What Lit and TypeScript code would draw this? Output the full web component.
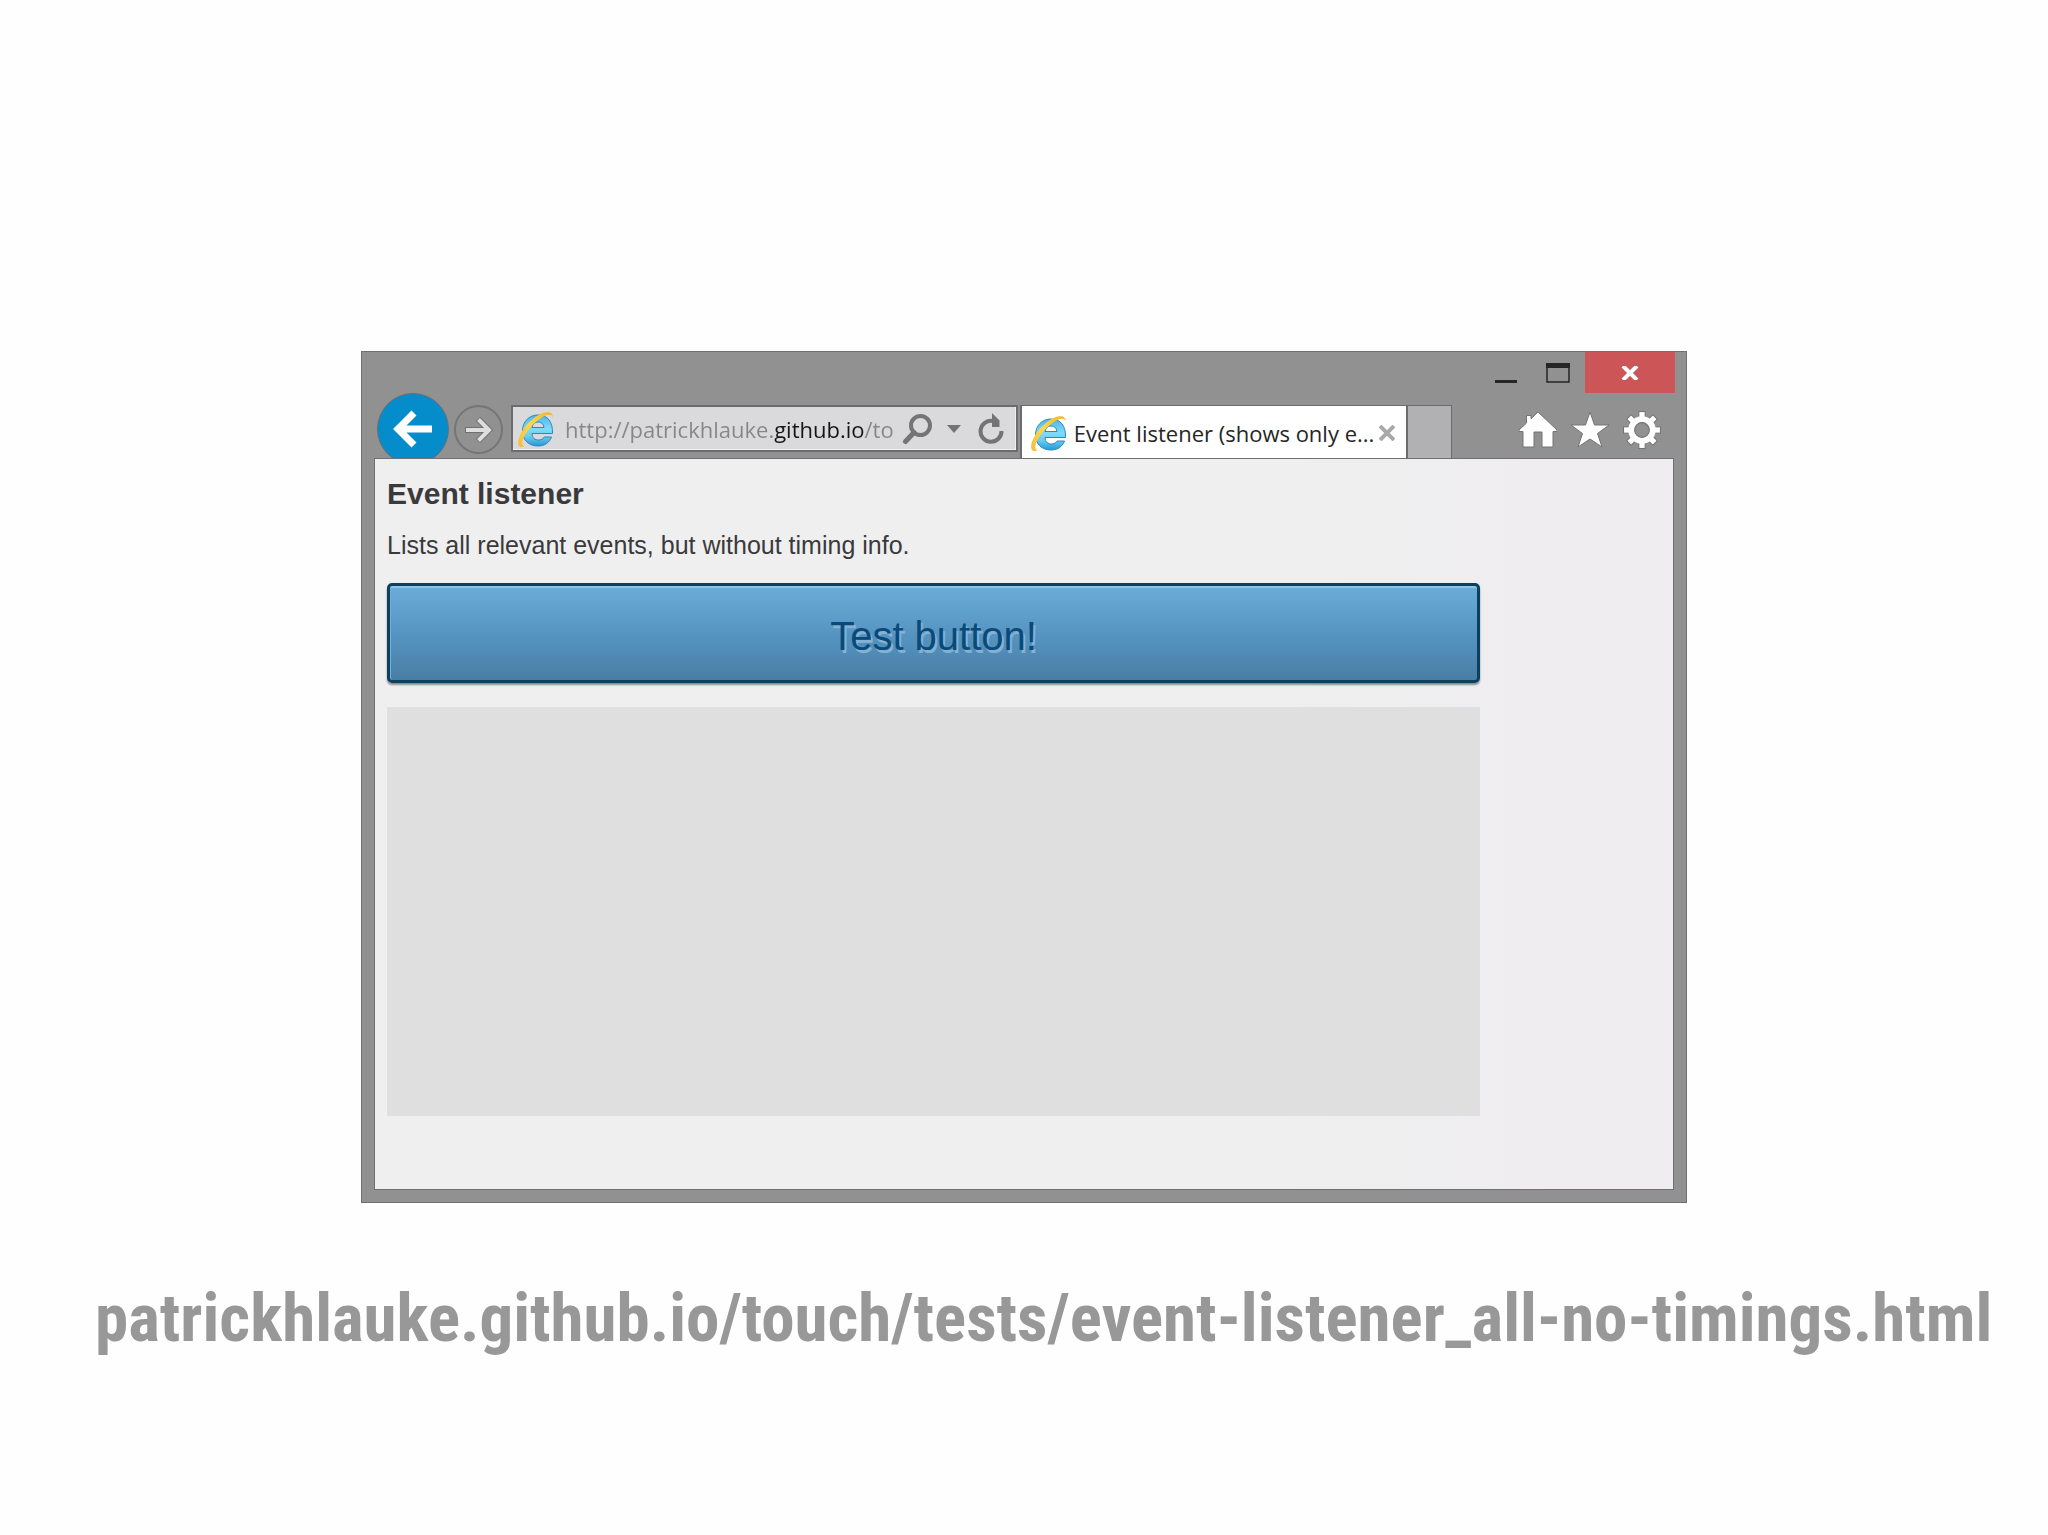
import { LitElement, html, css, svg } from "lit";
import { customElement } from "lit/decorators.js";

const browserLogo = html`<svg class="logo" viewBox="0 0 36 38" aria-hidden="true">
  <defs>
    <linearGradient id="e" x1="0" y1="0" x2="0" y2="1">
      <stop offset="0" stop-color="#4fb4e6" />
      <stop offset="0.45" stop-color="#7fdcf8" />
      <stop offset="0.7" stop-color="#66cdf2" />
      <stop offset="1" stop-color="#2a96d2" />
    </linearGradient>
    <linearGradient id="s" x1="1" y1="0" x2="0" y2="1">
      <stop offset="0" stop-color="#f0b323" />
      <stop offset="0.5" stop-color="#ffd84a" />
      <stop offset="1" stop-color="#f2bd3a" />
    </linearGradient>
  </defs>
  <path fill="url(#e)" stroke="#2b88c0" stroke-width="1" fill-rule="evenodd"
    d="M34.5 23.5H14c.3 4.600 3 6.500 6.500 6.500 2.800 0 4.600-1 5.700-3h7.300C31.300 32.800 26.500 36 20 36 10.500 36 4.500 29.800 4.500 20.800S11 5 20 5c9.500 0 15 6.800 14.500 18.500ZM14 17.500h12c-.4-3.600-2.500-5.500-6-5.500s-5.500 2-6 5.500Z" />
  <path fill="url(#s)"
    d="M35 8.500C35.500 1 27.500 0 18 6.500 7 14-2.500 29 .8 35.500c1.200 2 3.800 1.800 6.200.5-4.200.2-3.600-6.500 2.500-15C16.500 11.500 27 3.800 32 4.800c2 .4 2.800 1.700 3 3.700Z" />
</svg>`;

const gearTeeth = [0, 45, 90, 135, 180, 225, 270, 315].map(
  (a) => svg`<rect x="15" y="0.500" width="6" height="8" transform="rotate(${a} 18 18)" />`
);

@customElement("browser-toolbar")
export class BrowserToolbar extends LitElement {
  static styles = css`
    :host {
      display: block;
      font-family: "Open Sans", "Noto Sans", sans-serif;
    }
    button {
      appearance: none;
      border: 0;
      margin: 0;
      padding: 0;
      background: none;
      font: inherit;
      color: inherit;
      display: flex;
      align-items: center;
      justify-content: center;
    }
    svg {
      display: block;
      flex: none;
    }
    .controls {
      display: flex;
      justify-content: flex-end;
      height: 41px;
      padding-right: 11px;
    }
    .control {
      width: 52px;
      height: 41px;
    }
    .control.close {
      width: 90px;
      background: #cc5558;
      margin-left: 1px;
    }
    .bar {
      display: flex;
      align-items: flex-end;
      height: 65px;
      padding: 0 25px 0 15px;
      overflow: hidden;
    }
    .back {
      align-self: flex-start;
      flex: none;
      width: 72px;
      height: 72px;
      border: 1px solid #6a6d70;
      border-radius: 50%;
      background: #058cca;
    }
    .forward {
      align-self: flex-start;
      flex: none;
      width: 49px;
      height: 49px;
      margin: 12px 8px 0 5px;
      border: 2px solid #757575;
      border-radius: 50%;
    }
    .address {
      align-self: flex-start;
      flex: 486 1 0;
      min-width: 0;
      box-sizing: border-box;
      height: 47px;
      margin-top: 12px;
      padding: 0 8px 0 5px;
      display: flex;
      align-items: center;
      border: 2px solid #6c6c6e;
      background: #dadadc;
      box-shadow: inset -1px -1px #efefef;
    }
    .url {
      flex: 1 1 0;
      min-width: 0;
      margin-left: 11px;
      padding: 0;
      border: 0;
      outline: 0;
      font: 22px/30px "Open Sans", "Noto Sans", sans-serif;
      color: transparent;
      background: linear-gradient(90deg, #868686 209px, #151515 209px 300px, #868686 300px);
      background-clip: text;
      -webkit-background-clip: text;
    }
    .address button {
      flex: none;
    }
    .search {
      width: 32px;
    }
    .menu {
      width: 40px;
    }
    .reload {
      width: 34px;
    }
    .logo {
      width: 36px;
      height: 38px;
    }
    .tabs {
      flex: 426 1 0;
      min-width: 0;
      display: flex;
      height: 53px;
      margin-left: 2px;
      box-sizing: border-box;
      border: solid #6c6c6e;
      border-width: 1px 1px 0 2px;
    }
    .tab {
      flex: 1 1 0;
      min-width: 0;
      display: flex;
      align-items: center;
      padding: 2px 10px 0 9px;
      background: #fff;
      color: #262626;
    }
    .title {
      flex: 1 1 0;
      min-width: 0;
      margin-left: 7px;
      font-size: 22px;
      line-height: 30px;
      white-space: nowrap;
    }
    .tab button {
      width: 18px;
      height: 30px;
    }
    .new-tab {
      flex: none;
      width: 45px;
      height: 100%;
      border-left: 2px solid #6c6c6e;
      background: #b1b0b2;
    }
    .tools {
      flex: none;
      align-self: flex-start;
      display: flex;
      gap: 14px;
      margin-top: 18px;
      padding-left: 67px;
    }
    .tools svg {
      width: 38px;
      height: 38px;
    }
  `;

  render() {
    return html`
      <div class="controls">
        <button class="control" aria-label="Minimize">
          <svg width="24" height="24"><path d="M1 19h22v3H1z" fill="#262626" /></svg>
        </button>
        <button class="control" aria-label="Maximize">
          <svg width="24" height="20">
            <path d="M1 1h22v18H1Z" fill="none" stroke="#262626" stroke-width="1.500" />
            <path d="M0 0h24v5H0z" fill="#262626" />
          </svg>
        </button>
        <button class="control close" aria-label="Close">
          <svg width="18" height="14">
            <path d="M2 0 16 14M16 0 2 14" stroke="#fff" stroke-width="4" />
          </svg>
        </button>
      </div>
      <div class="bar">
        <button class="back" aria-label="Back">
          <svg width="42" height="40" viewBox="0 0 42 40">
            <path d="M40 20H6M22 4 6 20l16 16" fill="none" stroke="#fff" stroke-width="7" />
          </svg>
        </button>
        <button class="forward" aria-label="Forward">
          <svg width="30" height="28" viewBox="0 0 30 28">
            <g fill="none">
              <path d="M1 14h24M14 3l11 11-11 11" stroke="#707070" stroke-width="6" />
              <path d="M2 14h23M14.500 3.500 25 14 14.500 24.500" stroke="#dedede" stroke-width="4" />
            </g>
          </svg>
        </button>
        <div class="address">
          ${browserLogo}
          <input class="url" type="text" aria-label="Address" .value=${"http://patrickhlauke.github.io/to"} />
          <button class="search" aria-label="Search">
            <svg width="32" height="32" viewBox="0 0 32 32">
              <g fill="none" stroke="#747474">
                <circle cx="18.500" cy="12.500" r="9.500" stroke-width="4" />
                <path d="M12 19.500 3.500 28.500" stroke-width="5" stroke-linecap="round" />
              </g>
            </svg>
          </button>
          <button class="menu" aria-label="Show address list">
            <svg width="14" height="8"><path d="M0 0h14L7 8z" fill="#747474" /></svg>
          </button>
          <button class="reload" aria-label="Refresh">
            <svg width="28" height="32" viewBox="0 0 28 32">
              <path d="M16 8A10.500 10.500 0 1 0 24.500 18" fill="none" stroke="#747474" stroke-width="4" />
              <path d="M15 0 22.500 7.500V14H15z" fill="#747474" />
            </svg>
          </button>
        </div>
        <div class="tabs">
          <div class="tab">
            ${browserLogo}
            <span class="title">Event listener (shows only e...</span>
            <button aria-label="Close tab">
              <svg width="16" height="16">
                <path d="M1 1 15 15M15 1 1 15" stroke="#a9a9a9" stroke-width="4" />
              </svg>
            </button>
          </div>
          <button class="new-tab" aria-label="New tab"></button>
        </div>
        <div class="tools">
          <button aria-label="Home">
            <svg viewBox="0 0 38 38">
              <path fill="#fff" stroke="#747474" stroke-width="1"
                d="M19 1 38 19v1.500h-4V36H23V21h-8v15H4V20.500H0V19L7.500 12V4.500H12v3.300Z" />
            </svg>
          </button>
          <button aria-label="Favorites">
            <svg viewBox="0 0 38 38">
              <path fill="#fff" stroke="#747474" stroke-width="1"
                d="m19 1 4.500 13H38L26.500 22.500 31 36 19 28 7 36l4.500-13.500L0 14h14.500Z" />
            </svg>
          </button>
          <button aria-label="Tools">
            <svg viewBox="0 0 36 36">
              <g fill="#fff" stroke="#747474" stroke-width="1">${gearTeeth}</g>
              <circle cx="18" cy="18" r="10" fill="none" stroke="#fff" stroke-width="6" />
              <circle cx="18" cy="18" r="7" fill="#919191" stroke="#747474" />
            </svg>
          </button>
        </div>
      </div>
    `;
  }
}

@customElement("app-root")
export class AppRoot extends LitElement {
  static styles = css`
    :host {
      display: block;
      min-height: 100vh;
      box-sizing: border-box;
      padding-top: 351px;
      background: #fefefe;
      font-family: "Liberation Sans", Arial, sans-serif;
    }
    .window {
      box-sizing: border-box;
      width: calc(100% - 722px);
      min-width: 1100px;
      margin: 0 auto;
      padding-bottom: 12px;
      border: 1px solid #707072;
      background: #919191;
    }
    .page {
      margin: 0 12px;
      padding: 18px 0 73px 12px;
      border: 1px solid #707072;
      background: linear-gradient(90deg, #efefef 70%, #efedf0 90%);
      color: #3a3a3c;
    }
    h1 {
      margin: 0 0 20px;
      font-size: 30px;
      line-height: 34px;
    }
    p {
      margin: 0 0 23px;
      font-size: 25px;
      line-height: 29px;
    }
    .test {
      display: block;
      box-sizing: border-box;
      width: 85%;
      height: 100px;
      margin: 0 0 24px;
      padding: 6px 0 0;
      border: 3px solid #0c4060;
      border-radius: 5px;
      background: linear-gradient(#6cacd9, #5493c0 55%, #497ea4);
      box-shadow: inset 0 2px #8dc3e4, inset 1px 0 #6fb2d8, 0 2px 2px #8a8a8a;
      font: 40px/46px "Liberation Sans", Arial, sans-serif;
      color: #0a4a7a;
      text-shadow: 2px 3px #86b1d2;
    }
    .log {
      display: block;
      width: 85%;
      min-height: 409px;
      background: #dfdfdf;
    }
    .caption {
      display: block;
      margin: 75px 0 0 95px;
      font: 700 67px/80px "Roboto Condensed", "Liberation Sans", sans-serif;
      color: #999899;
      text-decoration: none;
      white-space: nowrap;
    }
  `;

  render() {
    return html`
      <section class="window">
        <browser-toolbar></browser-toolbar>
        <main class="page">
          <h1>Event listener</h1>
          <p>Lists all relevant events, but without timing info.</p>
          <button class="test">Test button!</button>
          <output class="log"></output>
        </main>
      </section>
      <a class="caption" href="http://patrickhlauke.github.io/touch/tests/event-listener_all-no-timings.html"
        >patrickhlauke.github.io/touch/tests/event-listener_all-no-timings.html</a>
    `;
  }
}
